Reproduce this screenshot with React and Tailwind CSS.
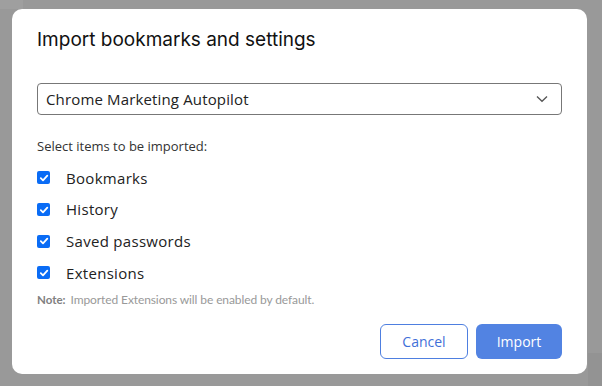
import React from "react";

function Check({ label }) {
  return (
    <label className="flex items-center h-[31.7px]">
      <span className="w-[13px] h-[13px] rounded-[2px] bg-[#0a6cf5] flex items-center justify-center">
        <svg width="10" height="10" viewBox="0 0 10 10">
          <path d="M1.8 5.2 L4 7.3 L8.3 2.6" fill="none" stroke="white" strokeWidth="1.8" strokeLinecap="round" strokeLinejoin="round" />
        </svg>
      </span>
      <span className="ml-[16px] text-[15px] text-[#222] tracking-[0.3px]">{label}</span>
    </label>
  );
}

export default function App() {
  return (
    <div className="relative w-[602px] h-[386px] overflow-hidden bg-[#999999]" style={{ fontFamily: '"Open Sans", "Noto Sans", sans-serif' }}>
      <div className="flex h-full">
        <div className="w-[23px] h-[9px] bg-[#9f9f9f]" />
      </div>
      <div className="absolute left-[588px] top-[353px] right-0 bottom-0 bg-[#939393]" />
      <div className="absolute left-[12px] top-[9px] w-[575px] h-[365px] bg-white rounded-[10px] px-[25px] pt-[18px] flex flex-col">
        <h1 className="text-[19px] text-[#111] leading-[26px]" style={{ fontFamily: 'Inter, "Noto Sans", sans-serif' }}>Import bookmarks and settings</h1>
        <div className="mt-[30px] h-[32px] border border-[#777] rounded-[4px] flex items-center justify-between pl-[8px] pr-[13px]">
          <span className="text-[15px] text-[#222] tracking-[0.15px]">Chrome Marketing Autopilot</span>
          <svg width="12" height="8" viewBox="0 0 12 8">
            <path d="M1 1.5 L6 6.3 L11 1.5" fill="none" stroke="#555" strokeWidth="1.3" />
          </svg>
        </div>
        <div className="mt-[22px] text-[13px] text-[#333] leading-[18px]">Select items to be imported:</div>
        <div className="mt-[7px] flex flex-col">
          <Check label="Bookmarks" />
          <Check label="History" />
          <Check label="Saved passwords" />
          <Check label="Extensions" />
        </div>
        <div className="mt-[3px] text-[12px] leading-[16px] flex items-baseline gap-[5px]" style={{ fontFamily: 'Lato, "Noto Sans", sans-serif' }}>
          <span className="text-[#808080] font-bold text-[11.5px]">Note:</span>
          <span className="text-[#999] tracking-[-0.1px]">Imported Extensions will be enabled by default.</span>
        </div>
        <div className="mt-[16px] flex justify-end gap-[8px]">
          <button className="w-[88px] h-[35px] rounded-[6px] border border-[#4e7fe0] text-[#3f6fd8] text-[14px]">Cancel</button>
          <button className="w-[86px] h-[35px] rounded-[6px] bg-[#5283e2] text-white text-[14px]">Import</button>
        </div>
      </div>
    </div>
  );
}
